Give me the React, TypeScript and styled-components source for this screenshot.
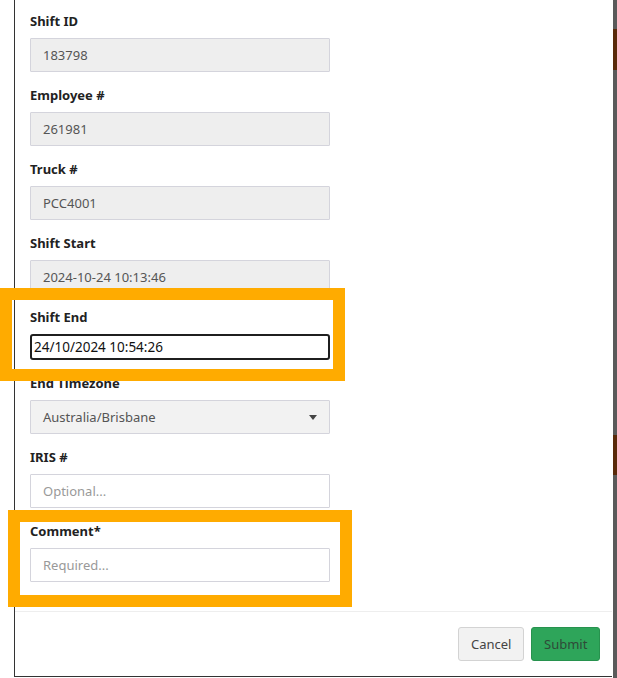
import styled, { createGlobalStyle } from 'styled-components';

const Global = createGlobalStyle`
  html, body { margin: 0; padding: 0; background: #fff; }
  body { font-family: "Noto Sans", "Open Sans", sans-serif; color: #333; }
`;

const Page = styled.div`
  position: relative;
  width: 617px;
  height: 678px;
  overflow: hidden;
  display: flex;
  background: #fff;
`;

const Backdrop = styled.div`
  position: absolute;
  right: 0;
  top: 0;
  width: 4px;
  height: 678px;
  background: linear-gradient(#5a5a5a 0 29px, #5a2a0a 29px 70px, #5a5a5a 70px 435px, #5a2a0a 435px 475px, #5a5a5a 475px);
`;

const Modal = styled.div`
  margin-left: 14px;
  width: 598px;
  height: 677px;
  border-left: 1px solid #333;
  border-bottom: 1px solid #333;
  display: flex;
  flex-direction: column;
  box-sizing: border-box;
`;

const Body = styled.div`
  flex: 1;
  padding: 11px 15px 0 15px;
`;

const Field = styled.div`
  margin-bottom: 13px;
`;

const Label = styled.div`
  font-size: 13px;
  font-weight: 700;
  line-height: 20px;
  color: #222;
  margin-bottom: 7px;
`;

const Input = styled.div<{ $variant?: 'readonly' | 'focus' | 'empty' | 'select' }>`
  width: 300px;
  height: ${p => (p.$variant === 'focus' ? '26px' : '34px')};
  box-sizing: border-box;
  display: flex;
  align-items: center;
  justify-content: space-between;
  padding: ${p => (p.$variant === 'focus' ? '0 2px' : '0 12px')};
  font-size: ${p => (p.$variant === 'focus' ? '13.5px' : '13px')};
  border-radius: ${p => (p.$variant === 'focus' ? '3px' : '1px')};
  border: ${p =>
    p.$variant === 'focus' ? '2px solid #1f1f1f' : '1px solid #d4d4dc'};
  background: ${p =>
    p.$variant === 'readonly' ? '#eeeeee' : p.$variant === 'select' ? '#f2f2f2' : '#fff'};
  color: ${p => (p.$variant === 'empty' ? '#999' : p.$variant === 'focus' ? '#111' : '#555')};
`;

const Caret = styled.span`
  width: 0;
  height: 0;
  border-left: 4px solid transparent;
  border-right: 4px solid transparent;
  border-top: 5px solid #444;
`;

const Footer = styled.div`
  border-top: 1px solid #eee;
  height: 64px;
  display: flex;
  justify-content: flex-end;
  align-items: center;
  gap: 7px;
  padding-right: 12px;
`;

const Button = styled.button<{ $primary?: boolean }>`
  height: 34px;
  padding: 0 12px;
  font-family: inherit;
  font-size: 13px;
  border-radius: 3px;
  border: 1px solid ${p => (p.$primary ? '#27924e' : '#d3d3d3')};
  background: ${p => (p.$primary ? '#2ea55a' : '#f2f2f2')};
  color: ${p => (p.$primary ? '#2f4a38' : '#444')};
  width: ${p => (p.$primary ? '69px' : '66px')};
`;

const Highlight = styled.div<{ $l: number; $t: number; $w: number; $h: number }>`
  position: absolute;
  left: ${p => p.$l}px;
  top: ${p => p.$t}px;
  width: ${p => p.$w}px;
  height: ${p => p.$h}px;
  border: 12px solid #ffab00;
  box-sizing: border-box;
  pointer-events: none;
`;

const fields: { label: string; value: string; variant: 'readonly' | 'focus' | 'empty' | 'select' }[] = [
  { label: 'Shift ID', value: '183798', variant: 'readonly' },
  { label: 'Employee #', value: '261981', variant: 'readonly' },
  { label: 'Truck #', value: 'PCC4001', variant: 'readonly' },
  { label: 'Shift Start', value: '2024-10-24 10:13:46', variant: 'readonly' },
  { label: 'Shift End', value: '24/10/2024 10:54:26', variant: 'focus' },
  { label: 'End Timezone', value: 'Australia/Brisbane', variant: 'select' },
  { label: 'IRIS #', value: 'Optional...', variant: 'empty' },
  { label: 'Comment*', value: 'Required...', variant: 'empty' },
];

export default function App() {
  return (
    <Page>
      <Global />
      <Modal>
        <Body>
          {fields.map(f => (
            <Field key={f.label}>
              <Label>{f.label}</Label>
              <Input $variant={f.variant}>
                {f.value}
                {f.variant === 'select' && <Caret />}
              </Input>
            </Field>
          ))}
        </Body>
        <Footer>
          <Button>Cancel</Button>
          <Button $primary>Submit</Button>
        </Footer>
      </Modal>
      <Backdrop />
      <Highlight $l={0} $t={288} $w={345} $h={93} />
      <Highlight $l={8} $t={510} $w={344} $h={97} />
    </Page>
  );
}
